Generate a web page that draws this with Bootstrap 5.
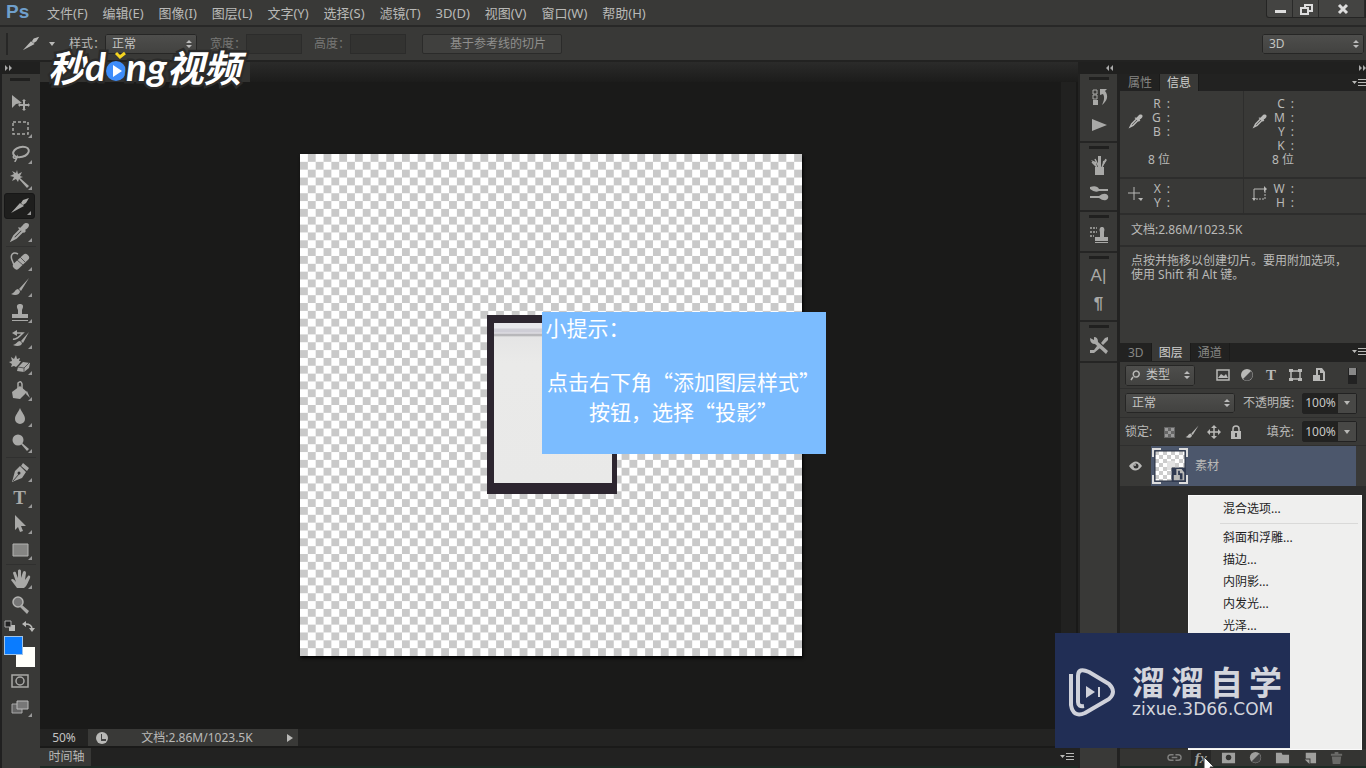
<!DOCTYPE html>
<html lang="zh-CN">
<head>
<meta charset="utf-8">
<meta name="viewport" content="width=device-width, initial-scale=1">
<title>Ps</title>
<link href="https://cdn.jsdelivr.net/npm/bootstrap@5.3.0/dist/css/bootstrap.min.css" rel="stylesheet">
<style>
:root{--panel:#393937;--dark:#1f1f1e;--line:#282827;--fg:#b9b9b7;--dim:#777775}
body{font:12px/14px "Noto Sans","Noto Sans CJK SC",sans-serif;color:var(--fg);background:var(--panel);overflow:hidden}
button{background:none;border:0;padding:0;color:inherit;font:inherit}
svg{display:block;fill:currentColor}
.ln{fill:none;stroke:currentColor;stroke-width:1.5}
.menubar{height:27px;border-bottom:2px solid var(--line)}
.ps-logo{font:bold 19px/24px "Liberation Sans",sans-serif;color:#6f9fcb;width:39px;padding-left:6px}
.menus{font-size:13px;line-height:24px;gap:15px;padding-left:8px}
.winbtns{height:18px;background:#444442;border:1px solid #252524;border-top:0;border-radius:0 0 0 3px;color:#ddd}
.winbtns button{width:26px;height:17px;border-right:1px solid #2a2a29}
.winbtns button:last-child{width:46px}
.optbar{height:35px;border-bottom:2px solid #222221;padding-left:6px}
.grip-v{width:2px;height:22px;background:#272726}
.form-select.ps-sel{--bs-form-select-bg-img:url("data:image/svg+xml,%3Csvg xmlns='http://www.w3.org/2000/svg' viewBox='0 0 8 10'%3E%3Cpath fill='%23bbb' d='M1 4l3-3 3 3zM1 6l3 3 3-3z'/%3E%3C/svg%3E");background-image:var(--bs-form-select-bg-img),linear-gradient(#4e4e4c,#424240);background-size:8px 10px,100% 100%;background-position:right 3px center,0 0;border:1px solid #262625;border-radius:2px;color:#c4c4c2;font-size:12px;line-height:16px;padding:1px 14px 1px 6px;height:20px}
.form-select.ps-sel.with-icon{padding-left:20px;width:70px;height:21px}
.ps-in{background:#333331;border:1px solid #2c2c2b;height:20px;width:56px;border-radius:0}
.guide-btn{width:140px;height:20px;background:#40403e;border:1px solid #2b2b2a;color:#8f8f8d;border-radius:2px;padding-left:12px}
.dimtxt{color:var(--dim)}
.toolbox{width:40px;border-left:2px solid #202020;background:var(--panel)}
.strip{height:12px;background:#20201f;color:#aaa}
.grip{width:20px;height:3px;background:#20201f;margin:0 auto}
.toolbox .grip{margin:4px 0 8px 8px}
.tool{width:31px;height:26px;margin:0 0 0 2px;display:flex;align-items:center;justify-content:center;position:relative;color:#a9a9a7;border-radius:3px;flex:none}
.tool.sub::after{content:"";position:absolute;right:3px;bottom:3px;border:2px solid transparent;border-right-color:#999;border-bottom-color:#999}
.tool.on{background:#1e1e1d;border:1px solid #171717}
.tool svg,.dockbtn svg{width:22px;height:22px}
.tsep{height:1px;background:#30302f;margin:1px 4px;flex:none}
.swatches{height:50px;display:grid;grid-template-columns:12px 7px 12px;grid-template-rows:18px 11px 8px 12px;padding-left:2px}
.tabstrip{height:20px;background:linear-gradient(#2b2b2a,#1c1c1b)}
.doctab{width:210px;background:#323230}
.canvas{background:#1a1a19}
.vscroll{width:17px;background:#212120;border-right:2px solid #191918}
.artboard{width:502px;height:502px;position:relative;background:repeating-conic-gradient(#c9c9c9 0 25%,#fff 0 50%) 0 0/3.125% 3.125%;box-shadow:1px 2px 3px #000}
.frame-pic{position:absolute;left:187px;top:161px;width:130px;height:179px;border:solid #2d2630;border-width:8px 5px 11px 7px;background:linear-gradient(#e8e8ec 0 5px,#cfced6 6px 9px,#e2e1e6 10px,#a9a9ac 12px,#e5e5e5 14px,#eaeae9 40px,#e9e9e8)}
.tip{position:absolute;left:242px;top:158px;width:284px;height:142px;background:#7bbcff;color:#fff;font:21px/30px "Noto Sans CJK SC",sans-serif}
.tip p{margin:0 0 24px;padding-left:4px}
.ps-main{border-bottom:2px solid #1c2a24}
.statusbar{height:18px;background:#232322;border-top:1px solid #1a1a19}
.statusbar>*{height:17px}
.zoomin{width:48px;background:#232322;border:0;color:#c4c4c2;text-align:center;padding:0}
.st-info{background:var(--panel);width:210px;padding:0 4px 0 8px}
.timeline{height:20px;background:#222221;border-top:2px solid #1a1a19}
.timeline button{width:51px;background:#383836;height:18px;padding-left:2px}
.dock{width:37px;background:var(--panel)}
.dockgrp{border-bottom:2px solid #252524;padding:3px 0 2px}
.dockbtn{width:37px;height:28px;display:flex;align-items:center;justify-content:center;color:#a9a9a7}
.dockgrp .dockbtn:first-of-type{margin-top:3px}
.rpanel{width:246px;background:var(--panel)}
.ptabs{height:17px;background:#222221;line-height:17px;padding-left:1px;border-bottom:1px solid #222}
.ptabs button{padding:0 7px;color:#868684;height:17px;border-right:1px solid #1b1b1a}
.ptabs button.active{background:var(--panel);color:#d0d0ce;height:17px}
.ptabs.low{height:19px}.ptabs.low button,.ptabs.low button.active{height:18px}
.cell{width:125px;padding-top:6px}
.cell+.cell{border-left:1px solid #2e2e2d}
.cell svg{width:16px;height:16px}
.labs{width:26px;text-align:right;white-space:nowrap}
.irow{border-bottom:2px solid #2d2d2c}
.lrow{border-bottom:1px solid #2f2f2e;padding:0 9px 0 5px}
.pct{display:flex;border:1px solid #222;border-radius:2px;height:21px}
.pct input{width:35px;border:0;padding:0;background:#222221;color:#c8c8c6;text-align:center}
.pct button{width:18px;background:#484846}
.layer{height:40px}
.eye{width:31px;height:40px}
.lname{background:#4c576c;height:40px;margin-right:10px}
.layers{background:#2c2c2b}
.fxbar{height:19px;background:#343432;color:#a0a09e;gap:7px;padding-right:20px;border-bottom:2px solid #1c2a24}
.fxbar button{width:20px;height:17px;display:grid;place-items:center}
.fxbar svg{width:15px;height:15px}
.fxmenu{position:absolute;right:4px;bottom:18px;width:174px;height:255px;background:#efefee;color:#1e1e1e;padding:2px 0;border:1px solid #fafafa;z-index:5}
.fxmenu button{display:block;width:100%;text-align:left;padding-left:34px;line-height:22px;height:22px}
.fxmenu hr{margin:3px 3px 3px 31px;color:#999}
.brand{position:absolute;right:76px;bottom:20px;width:235px;height:115px;background:#212e55;color:#d3d5dc;z-index:6;padding-left:12px}
.brand-cn{font:bold 33px/36px "Noto Sans CJK SC",sans-serif;gap:6px}
.brand-en{font:17px/20px "DejaVu Sans",sans-serif}
.vid{position:absolute;left:48px;top:44px;z-index:6;font:italic bold 37px/44px "Noto Sans CJK SC",sans-serif;color:#fff;-webkit-text-stroke:5px #2b2b2a;paint-order:stroke fill}
.vid .latin{font:italic bold 39px/44px "Lato",sans-serif}
.cursor{position:absolute;right:150px;bottom:-8px;z-index:7}
</style>
</head>
<body class="vh-100 d-flex flex-column position-relative">
<svg width="0" height="0" class="position-absolute"><defs>
<symbol id="dropper" viewBox="0 0 22 22"><path d="M11 7l3-3c2-3 6-2 6 0s-1 3-4 5l1 1-2 2-6-5 1-1z"/><path class="ln" style="stroke-width:2" d="M12 8L5 15l-2 4 4-2 7-7"/></symbol>
<symbol id="half" viewBox="0 0 16 16"><circle cx="8" cy="8" r="6"/><path d="M4 12A5 5 0 0 0 12 4z" fill="#444"/></symbol>
<symbol id="flyout" viewBox="0 0 14 10"><path d="M0 3h5L2.500 6zM6 1h8v1H6zM6 4h8v1H6zM6 7h8v1H6z"/></symbol>
<symbol id="doc" viewBox="0 0 16 16"><path d="M5 8V1h6l3 4v9H9v-1h3V6h-3V3H7v5z"/><path d="M2 8h7v6H2z"/></symbol>
<symbol id="brush" viewBox="0 0 22 22"><path d="M20 2L10 13l2 2zM9 13c-3 0-3 4-7 5 4 2 9 1 9-3z"/></symbol>
<symbol id="stamp" viewBox="0 0 22 22"><path d="M9 12V8C7 4 8 2 11 2s4 2 2 6v4h6v4H3v-4zM3 18h16v1H3z"/></symbol>
<symbol id="slice" viewBox="0 0 22 22"><path d="M2 18L11 8l4 3zM12 8l2-3 6-2-3 5-3 2z"/></symbol>
</defs></svg>

<header class="menubar d-flex">
  <div class="ps-logo">Ps</div>
  <nav class="menus d-flex flex-grow-1">
    <button>文件(F)</button><button>编辑(E)</button><button>图像(I)</button><button>图层(L)</button><button>文字(Y)</button><button>选择(S)</button><button>滤镜(T)</button><button>3D(D)</button><button>视图(V)</button><button>窗口(W)</button><button>帮助(H)</button>
  </nav>
  <div class="winbtns d-flex">
    <button aria-label="最小化"><svg width="26" height="16"><path d="M8 9h11v3H8z"/></svg></button>
    <button aria-label="还原"><svg width="26" height="16" viewBox="0 0 26 16"><path class="ln" style="stroke-width:2" d="M12 7V4h7v6h-3M8 7h7v6H8z"/></svg></button>
    <button aria-label="关闭"><svg width="45" height="16" viewBox="0 0 45 16"><path class="ln" style="stroke-width:3" d="M20 4l8 8M28 4l-8 8"/></svg></button>
  </div>
</header>

<form class="optbar d-flex align-items-center">
  <span class="grip-v"></span>
  <svg style="margin-left:13px" width="20" height="20"><use href="#slice"/></svg>
  <svg class="ms-2" width="6" height="4"><path d="M0 0h6L3 4z"/></svg>
  <label style="margin-left:14px" for="style">样式：</label>
  <select id="style" class="form-select ps-sel" style="width:92px"><option>正常</option></select>
  <label class="dimtxt" style="margin-left:13px" for="w">宽度：</label><input id="w" class="ps-in" disabled>
  <label class="dimtxt" style="margin-left:12px" for="h">高度：</label><input id="h" class="ps-in" disabled>
  <button type="button" class="guide-btn ms-3">基于参考线的切片</button>
  <select aria-label="工作区" class="form-select ps-sel ms-auto" style="width:102px;margin-right:2px"><option>3D</option></select>
</form>

<div class="d-flex flex-grow-1" style="min-height:0">
  <aside class="toolbox d-flex flex-column">
    <div class="strip"><svg width="14" height="12"><path d="M3 3l3 3-3 3zM7 3l3 3-3 3z"/></svg></div>
    <div class="grip"></div>
    <button class="tool" aria-label="移动"><svg viewBox="0 0 22 22"><path d="M3 4v13l4-4 6-1zM15 8l2 2h-1v3h3v-1l2 2-2 2v-1h-3v3h1l-2 2-2-2h1v-3h-3v1l-2-2 2-2v1h3v-3h-1z"/></svg></button>
    <button class="tool sub" aria-label="选框"><svg viewBox="0 0 22 22"><path class="ln" stroke-dasharray="3 2" d="M4 5h15v12H4z"/></svg></button>
    <button class="tool sub" aria-label="套索"><svg viewBox="0 0 22 22"><ellipse class="ln" style="stroke-width:2" cx="12" cy="9" rx="8" ry="5" transform="rotate(-15 12 9)"/><path class="ln" d="M6 12c-4 2 0 5 2 2 0 3-2 3-2 5"/></svg></button>
    <button class="tool sub" aria-label="魔棒"><svg viewBox="0 0 22 22"><path d="M8 1l1 4 4-2-2 4 3 1-3 1 9 8-2 2-8-9-1 3-2-3-4 2 2-4-4-1 4-2-2-3 4 2z"/></svg></button>
    <button class="tool sub on" aria-label="切片"><svg><use href="#slice"/></svg></button>
    <button class="tool sub" aria-label="吸管"><svg><use href="#dropper"/></svg></button>
    <div class="tsep"></div>
    <button class="tool sub" aria-label="修复"><svg viewBox="0 0 22 22"><path class="ln" d="M9 4C4 1 1 5 3 10l2 5"/><rect x="2" y="8" width="19" height="7" rx="3" transform="rotate(-43 12 11)"/><path d="M8 10l6 5" stroke="#555" stroke-width="1"/><path d="M11 7l5 5" stroke="#555"/></svg></button>
    <button class="tool sub" aria-label="画笔"><svg><use href="#brush"/></svg></button>
    <button class="tool sub" aria-label="图章"><svg><use href="#stamp"/></svg></button>
    <button class="tool sub" aria-label="历史画笔"><svg viewBox="0 0 22 22"><path d="M20 4l-8 9 2 2zM11 13c-3 0-3 3-7 4 4 2 9 1 9-2z"/><path class="ln" d="M4 11c3 1 6-2 10-6H6"/><path d="M3 5l5-3v6z"/></svg></button>
    <button class="tool sub" aria-label="橡皮擦"><svg viewBox="0 0 22 22"><path d="M7 1l1 4 3-1-1 3h2l-2 3-3 3-2-1-3 1 1-3-3-2 3-1-1-4 3 2zM9 13l5-5 7 1-1 5-5 4-7-1z"/><path d="M9 13l6 1 5-5M15 14v4" fill="none" stroke="#555"/></svg></button>
    <button class="tool sub" aria-label="油漆桶"><svg viewBox="0 0 22 22"><path d="M3 12l8-6 7 6-7 7-7-1zM18 11l3 7-4-4z"/><path class="ln" d="M9 11V3q3-3 4 1v5"/></svg></button>
    <button class="tool sub" aria-label="模糊"><svg viewBox="0 0 22 22"><path d="M11 2c2 5 5 7 5 11a5 5 0 0 1-10 0c0-4 3-6 5-11z"/></svg></button>
    <button class="tool sub" aria-label="减淡"><svg viewBox="0 0 22 22"><circle cx="9" cy="8" r="5.500"/><path d="M13 11l7 6-2 2-6-7z"/></svg></button>
    <div class="tsep"></div>
    <button class="tool sub" aria-label="钢笔"><svg viewBox="0 0 22 22"><path d="M14 2l6 5-2 3-6-5zM11 5l6 6-4 6-10 4 3-11z"/><path d="M4 20l6-7" stroke="#444"/><circle cx="10" cy="12" r="1.500" fill="#333"/></svg></button>
    <button class="tool sub" aria-label="文字" style="font:bold 19px/24px 'Liberation Serif',serif">T</button>
    <button class="tool sub" aria-label="路径选择"><svg viewBox="0 0 22 22"><path d="M6 2l11 11h-5l2 5-3 1-2-5-3 3z"/></svg></button>
    <button class="tool sub" aria-label="矩形"><svg viewBox="0 0 22 22"><path d="M4 5h15v12H4z" fill="#858583" stroke="#b4b4b2"/></svg></button>
    <div class="tsep"></div>
    <button class="tool sub" aria-label="抓手"><svg viewBox="0 0 22 22"><path d="M8 20c-2-3-4-5-6-8 1-2 3-1 5 2L4 5c1-2 3-1 3 0l2 5V3c0-2 3-2 3 0v7l2-6c1-2 3-1 3 1l-1 7 3-4c1-1 3 0 2 2-2 4-3 8-6 10z"/></svg></button>
    <button class="tool" aria-label="缩放"><svg viewBox="0 0 22 22"><circle cx="9" cy="8" r="5" fill="#777" stroke="#b4b4b2" stroke-width="1.500"/><path d="M13 11l7 6-2 3-7-7z"/></svg></button>
    <div class="swatches">
      <svg width="36" height="16" style="grid-area:1/1/2/4"><path d="M5 7h6v6H5z"/><path d="M1 3h6v6H1z" fill="#222" stroke="#aaa"/><path class="ln" d="M21 6q7 0 7 5"/><path d="M18 6l4-3v6zM25 10h6l-3 4z"/></svg>
      <button aria-label="背景色" style="grid-area:3/2/5/4;background:#fffffa"></button>
      <button aria-label="前景色" style="grid-area:2/1/4/3;background:#0a7cff;border:1px solid #9fc3e8"></button>
    </div>
    <button class="tool" aria-label="快速蒙版"><svg viewBox="0 0 22 22"><path class="ln" d="M3 5h16v12H3z"/><circle class="ln" cx="11" cy="11" r="4"/></svg></button>
    <button class="tool sub" aria-label="屏幕模式"><svg viewBox="0 0 22 22"><path d="M3 8h10v9H3z" fill="#666" stroke="#aaa"/><path d="M8 5h11v8H8z" fill="#777" stroke="#bbb"/></svg></button>
  </aside>

  <main class="ps-main d-flex flex-column flex-grow-1" style="min-width:0">
    <div class="tabstrip d-flex"><div class="doctab"></div></div>
    <div class="d-flex flex-grow-1" style="min-height:0">
      <section class="canvas flex-grow-1 d-flex align-items-center justify-content-center">
        <div class="artboard">
          <div class="frame-pic"></div>
          <div class="tip"><p>小提示：</p><div class="text-center">点击右下角“添加图层样式”<br>按钮，选择“投影”</div></div>
        </div>
      </section>
      <div class="vscroll"></div>
    </div>
    <div class="statusbar d-flex align-items-center">
      <input class="zoomin" aria-label="缩放比例" value="50%">
      <div class="st-info d-flex align-items-center justify-content-between"><svg width="12" height="12"><circle cx="6" cy="6" r="6"/><path d="M6 2v5h4v2H5V2z" fill="#444"/></svg><span>文档:2.86M/1023.5K</span><button aria-label="更多"><svg width="8" height="10"><path d="M1 1l6 4-6 4z"/></svg></button></div>
    </div>
    <div class="timeline d-flex justify-content-between align-items-center"><button>时间轴</button><svg class="me-1" width="14" height="10"><use href="#flyout"/></svg></div>
  </main>

  <div class="d-flex flex-column" style="background:#222221">
    <div class="strip d-flex justify-content-between"><svg width="38" height="12"><path d="M31 3l-3 3 3 3zM35 3l-3 3 3 3z"/></svg><svg width="8" height="12"><path d="M1 3l3 3-3 3zM5 3l3 3-3 3z"/></svg></div>
    <div class="d-flex flex-grow-1" style="gap:3px;padding-left:2px;min-height:0">
      <aside class="dock">
        <div class="dockgrp"><div class="grip"></div>
          <button class="dockbtn" aria-label="历史记录"><svg viewBox="0 0 22 22"><path class="ln" style="stroke-width:1" d="M5 4h4v4H5zM5 9h4v4H5z"/><path d="M5 14h5v5H5zM12 9V3h7l-2 2c4 5 2 10-3 14 2-4 3-8 1-11z"/></svg></button>
          <button class="dockbtn" aria-label="动作"><svg viewBox="0 0 22 22"><path d="M4 5l15 6-15 6z"/></svg></button></div>
        <div class="dockgrp"><div class="grip"></div>
          <button class="dockbtn" aria-label="画笔预设"><svg viewBox="0 0 22 22"><path d="M7 12h9v8H7zM10 1h3v11h-3zM3 5l5 2 1 5zM19 5l-4 1-1 6z"/><path class="ln" d="M7 4l4 8M18 4l-4 8M4 7l5 5"/></svg></button>
          <button class="dockbtn" aria-label="画笔"><svg viewBox="0 0 22 22"><path d="M2 4q7-2 9 2h9v2h-9q-4 2-9-2zM2 13h9q4-3 7-2c3 1 3 5 0 6q-3 1-7-2H2z"/></svg></button></div>
        <div class="dockgrp"><div class="grip"></div>
          <button class="dockbtn" aria-label="仿制源"><svg viewBox="0 0 22 22"><path d="M12 13V8c-1-3 0-5 2-5s3 2 2 5v5h4v4H7v-4zM7 18h13v1H7z"/><path class="ln" stroke-dasharray="2 1" d="M2 4h7M2 8h7M2 12h4"/></svg></button></div>
        <div class="dockgrp"><div class="grip"></div>
          <button class="dockbtn" style="font:17px/20px 'Liberation Sans',sans-serif">A|</button>
          <button class="dockbtn" style="font:bold 17px/20px 'Liberation Sans',sans-serif">¶</button></div>
        <div class="dockgrp"><div class="grip"></div>
          <button class="dockbtn" aria-label="工具预设"><svg viewBox="0 0 22 22"><path d="M2 4l4 2V3q4 0 4 5l10 9-2 3L7 10Q2 10 2 4zM20 3l-3 1-4 5 2 2 5-5zM9 12l3 2-6 5H2v-3h4z"/></svg></button></div>
      </aside>

      <aside class="rpanel d-flex flex-column">
        <div class="ptabs d-flex"><button>属性</button><button class="active">信息</button><svg class="ms-auto mt-1" width="14" height="10"><use href="#flyout"/></svg></div>
        <div class="d-flex irow">
          <div class="cell d-flex" style="height:86px"><svg class="ms-2 mt-3"><use href="#dropper"/></svg><div class="labs">R&ensp;:<br>G&ensp;:<br>B&ensp;:<br><br>8 位</div></div>
          <div class="cell d-flex"><svg class="ms-2 mt-3"><use href="#dropper"/></svg><div class="labs">C&ensp;:<br>M&ensp;:<br>Y&ensp;:<br>K&ensp;:<br>8 位</div></div>
        </div>
        <div class="d-flex irow">
          <div class="cell d-flex" style="height:34px;padding-top:3px"><svg class="ms-2 mt-1" viewBox="0 0 16 16"><path class="ln" style="stroke-width:1" d="M6 1v13M0 7h12"/><path d="M10 12h5l-2 3z"/></svg><div class="labs">X&ensp;:<br>Y&ensp;:</div></div>
          <div class="cell d-flex" style="padding-top:3px"><svg class="ms-2 mt-1" viewBox="0 0 16 16"><path class="ln" style="stroke-width:1" d="M2 14V3h12"/><path d="M12 0l3 3-3 3zM0 12h4l-2 3z"/><path class="ln" style="stroke-width:1" stroke-dasharray="2 1" d="M4 13h9V5"/></svg><div class="labs">W&ensp;:<br>H&ensp;:</div></div>
        </div>
        <div class="irow" style="padding:8px 11px 8px">文档:2.86M/1023.5K</div>
        <div style="padding:7px 11px;height:96px">点按并拖移以创建切片。要用附加选项，<br>使用 Shift 和 Alt 键。</div>
        <div class="ptabs low d-flex"><button>3D</button><button class="active">图层</button><button>通道</button><svg class="ms-auto mt-1" width="14" height="10"><use href="#flyout"/></svg></div>
        <div class="lrow d-flex align-items-center" style="height:27px">
          <div class="position-relative"><select aria-label="类型" class="form-select ps-sel with-icon"><option>类型</option></select><svg class="position-absolute top-50 start-0 translate-middle-y ms-1" width="12" height="12"><path class="ln" d="M4 8L2 11M5 7a3 3 0 1 1 2 1q-2 0-2-1"/></svg></div>
          <div class="d-flex flex-grow-1" style="gap:8px;margin-left:20px">
            <button aria-label="像素"><svg width="16" height="16"><path class="ln" d="M2 3h12v10H2z"/><path d="M3 11l3-4 3 2 2-2 2 4z"/></svg></button>
            <button aria-label="调整"><svg width="16" height="16"><use href="#half"/></svg></button>
            <button aria-label="文字" style="width:16px;font:bold 15px/16px 'Liberation Serif',serif">T</button>
            <button aria-label="形状"><svg width="16" height="16"><path class="ln" d="M4 4h9v8H4z"/><path d="M2 2h4v3H2zM11 2h4v3h-4zM2 11h4v3H2zM11 11h4v3h-4z"/></svg></button>
            <button aria-label="智能对象"><svg width="16" height="16"><use href="#doc"/></svg></button>
          </div>
          <svg width="9" height="18"><path d="M0 2h9v16H0z" fill="#222"/><path d="M1 2h7v7H1z" fill="#888"/></svg>
        </div>
        <div class="lrow d-flex align-items-center justify-content-between" style="height:29px">
          <select aria-label="混合模式" class="form-select ps-sel" style="width:110px"><option>正常</option></select>
          <label for="op">不透明度:</label>
          <span class="pct"><input id="op" value="100%"><button aria-label="不透明度"><svg class="m-auto" width="6" height="4"><path d="M0 0h6L3 4z"/></svg></button></span>
        </div>
        <div class="lrow d-flex align-items-center" style="height:28px">
          <span>锁定:</span>
          <div class="d-flex flex-grow-1" style="gap:6px;margin-left:10px">
            <button aria-label="透明像素"><svg width="16" height="16"><path fill="#666" d="M2 3h11v11H2z"/><path fill="#999" d="M3 4h3v3H3zM9 4h3v3H9zM6 7h3v3H6zM3 10h3v3H3zM9 10h3v3H9z"/></svg></button>
            <button aria-label="图像像素"><svg width="16" height="16"><use href="#brush"/></svg></button>
            <button aria-label="位置"><svg width="16" height="16"><path class="ln" d="M8 3v11M2 8h12"/><path d="M5 4l3-3 3 3zM5 12l3 3 3-3zM4 5v6L1 8zM12 5v6l3-3z"/></svg></button>
            <button aria-label="全部"><svg width="16" height="16"><path d="M3 7h10v8H3z"/><path class="ln" d="M5 8V5q0-3 3-3t3 3v3"/><path fill="#444" d="M7 9h2v4H7z"/></svg></button>
          </div>
          <label class="me-2" for="fl">填充:</label>
          <span class="pct"><input id="fl" value="100%"><button aria-label="填充"><svg class="m-auto" width="6" height="4"><path d="M0 0h6L3 4z"/></svg></button></span>
        </div>
        <div class="layers flex-grow-1">
          <div class="layer d-flex" style="background:var(--panel)">
            <button class="eye" aria-label="可见"><svg class="m-auto" width="14" height="10"><path d="M0 5q7-9 13 0-7 9-13 0z"/><circle cx="7" cy="5" r="2.500" fill="#333"/><circle cx="6" cy="4" r="1"/></svg></button>
            <div class="lname flex-grow-1 d-flex align-items-center">
              <svg width="38" height="38" viewBox="0 0 38 38"><defs><pattern id="ck" width="8" height="8" patternUnits="userSpaceOnUse"><path fill="#fff" d="M0 0h8v8H0z"/><path fill="#ccc" d="M0 0h4v4H0zM4 4h4v4H4z"/></pattern></defs><path fill="none" stroke="#ddd" stroke-width="2" d="M2 10V2h8M28 2h8v8M2 28v8h8M36 28v8h-8"/><path fill="url(#ck)" stroke="#252d3d" d="M4 4h30v17H21v13H4z"/><path fill="#e2e2e2" d="M16 14h8v6h-4v3h-4z"/><path fill="#303a50" d="M21 21h14v14H21z"/><svg x="21" y="21" width="14" height="14"><use href="#doc"/></svg></svg>
              <span style="margin-left:6px">素材</span>
            </div>
          </div>
        </div>
        <div class="fxbar d-flex justify-content-end">
          <button aria-label="链接"><svg viewBox="0 0 16 16"><path class="ln" d="M7 5H4q-3 0-3 3t3 3h3M9 5h3q3 0 3 3t-3 3H9M5 8h6" opacity=".7"/></svg></button>
          <button style="font:italic bold 15px/16px 'Liberation Serif',serif;background:#272726">fx</button>
          <button aria-label="蒙版"><svg viewBox="0 0 16 16"><path fill-rule="evenodd" d="M1 3h14v11H1zM8 5a3 3 0 1 0 .1 0z"/></svg></button>
          <button aria-label="调整图层"><svg><use href="#half"/></svg></button>
          <button aria-label="新建组"><svg viewBox="0 0 16 16"><path d="M1 3h6l1 2h7v9H1z"/></svg></button>
          <button aria-label="新建图层"><svg viewBox="0 0 16 16"><path d="M4 3h11v11H9V9H4z"/><path d="M3 10h5v5z"/></svg></button>
          <button aria-label="删除" style="opacity:.5"><svg viewBox="0 0 16 16"><path d="M2 4h12v2H2zM6 2h4v2H6zM3 7h10l-1 8H4z"/></svg></button>
        </div>
      </aside>
    </div>
  </div>
</div>

<div class="fxmenu">
  <button>混合选项...</button><hr>
  <button>斜面和浮雕...</button><button>描边...</button><button>内阴影...</button><button>内发光...</button><button>光泽...</button>
</div>

<div class="vid d-flex align-items-center"><span>秒</span><span class="latin">d</span><svg width="24" height="40" viewBox="0 0 24 40" style="margin:0 -2px"><circle cx="12" cy="25" r="10" fill="#3e8dfa" stroke="none"/><path fill="#fff" stroke="none" d="M9 19l9 6-9 6z"/><path d="M12 7l4 4 5-4" fill="none" stroke="#f5d420" stroke-width="3"/></svg><span class="latin">ng</span><span>视频</span></div>

<div class="brand d-flex align-items-center">
  <svg width="50" height="54" viewBox="0 0 50 54" fill="none" stroke="#cfd1da" stroke-width="4"><path d="M4 10v31q2 13 14 8l24-14q8-7 0-15L22 8q-11-5-11 4v26q0 5 6 4" stroke-linejoin="round" fill="none"/><path d="M19 22l9 6-9 6z" fill="#cfd1da" stroke="none"/><path d="M32 23v10" stroke-width="2"/></svg>
  <div style="margin-left:15px"><div class="brand-cn d-flex"><span>溜</span><span>溜</span><span>自</span><span>学</span></div><div class="brand-en">zixue.3D66.COM</div></div>
</div>
<svg class="cursor" width="14" height="20"><path fill="#fff" stroke="#333" d="M2 1v14l3-3 3 6 3-1-3-6h4z"/></svg>
<script src="https://cdn.jsdelivr.net/npm/bootstrap@5.3.0/dist/js/bootstrap.bundle.min.js"></script>
</body>
</html>
